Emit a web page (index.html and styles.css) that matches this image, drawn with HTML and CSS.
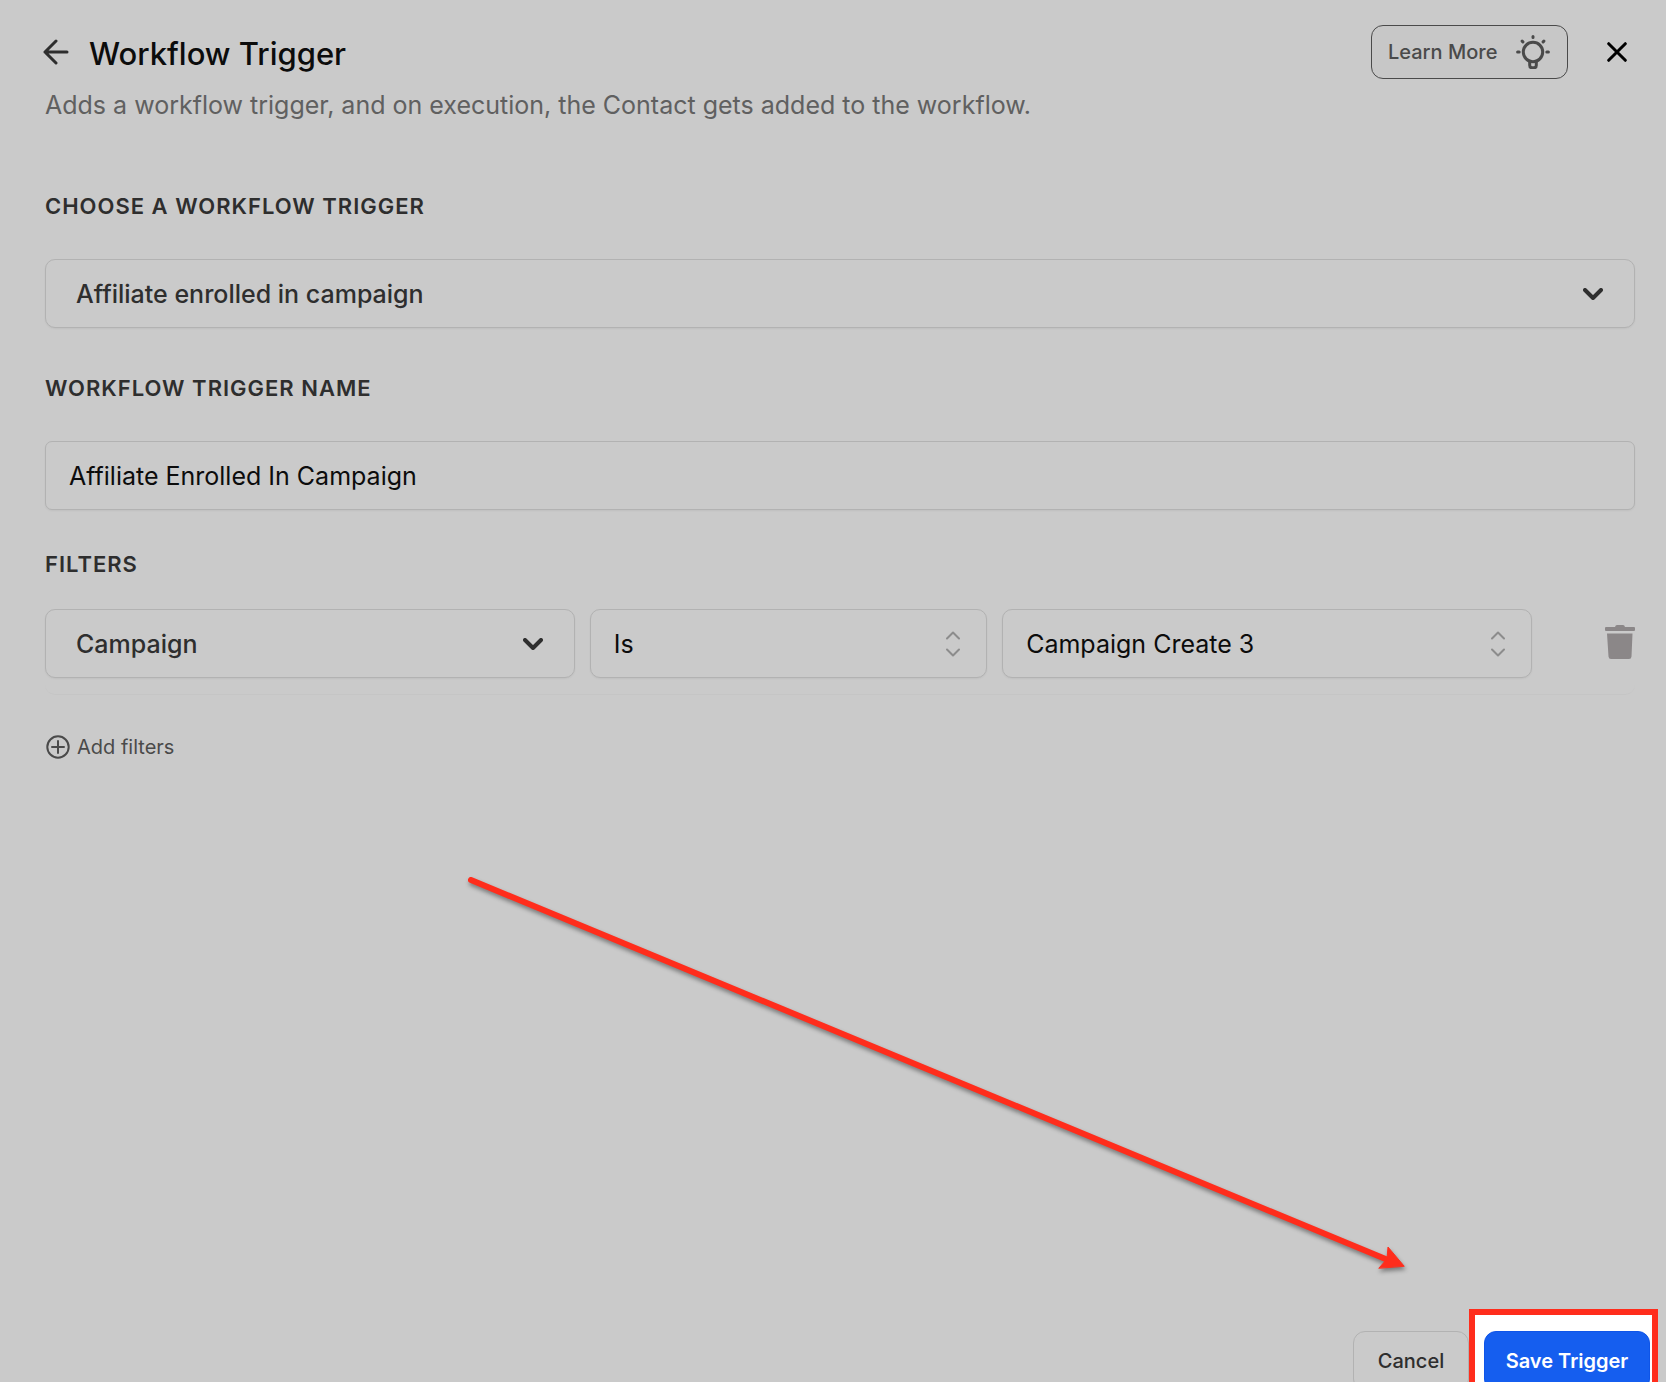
FILE: index.html
```html
<!DOCTYPE html>
<html lang="en">

<head>
    <meta charset="utf-8">
    <meta name="viewport" content="width=device-width, initial-scale=1">
    <title>Workflow Trigger</title>
    <link rel="stylesheet" href="styles.css">
</head>

<body>
    <div class="drawer">
        <header class="drawer-header">
            <div class="header-row">
                <button type="button" class="icon-btn back-btn" aria-label="Back">
                    <svg width="26" height="26" viewBox="0 0 26 26">
                        <path d="M24 13H2M13 2L2 13L13 24" />
                    </svg>
                </button>
                <h1>Workflow Trigger</h1>
                <button type="button" class="learn-btn">
                    Learn More
                    <svg width="34" height="34" viewBox="0 0 34 34">
                        <circle cx="17" cy="17" r="9.7" />
                        <path d="M13.7 26v4.2q0 2.6 2.4 2.6h1.8q2.4 0 2.4-2.6V26" />
                        <path d="M17 1.6v1M6.1 6.1l.8.8M27.9 6.1l-.8.8M1.6 17h1.6M30.8 17h1.6" />
                    </svg>
                </button>
                <button type="button" class="icon-btn close-btn" aria-label="Close">
                    <svg width="20" height="20" viewBox="0 0 20 20">
                        <path d="M1.7 1.7L18.3 18.3M18.3 1.7L1.7 18.3" />
                    </svg>
                </button>
            </div>
            <p>Adds a workflow trigger, and on execution, the Contact gets added to the workflow.</p>
        </header>

        <main class="drawer-body">
            <label class="field-label" for="trigger">Choose a workflow trigger</label>
            <div class="select-wrap main-select">
                <select id="trigger">
                    <option>Affiliate enrolled in campaign</option>
                </select>
                <svg class="chevron" width="20" height="12" viewBox="0 0 20 12">
                    <path d="M2 2L10 10L18 2" />
                </svg>
            </div>

            <label class="field-label" for="trigger-name">Workflow trigger name</label>
            <input type="text" id="trigger-name" class="text-input" value="Affiliate Enrolled In Campaign">

            <h2 class="field-label filters-label">Filters</h2>
            <div class="filter-row">
                <div class="select-wrap main-select">
                    <select aria-label="Filter field">
                        <option>Campaign</option>
                    </select>
                    <svg class="chevron" width="20" height="12" viewBox="0 0 20 12">
                        <path d="M2 2L10 10L18 2" />
                    </svg>
                </div>
                <div class="select-wrap">
                    <select aria-label="Operator">
                        <option>Is</option>
                    </select>
                    <svg class="updown" width="14" height="26" viewBox="0 0 14 26">
                        <path d="M1 7.5L7 1.5L13 7.5M1 18.5L7 24.5L13 18.5" />
                    </svg>
                </div>
                <div class="select-wrap">
                    <select aria-label="Filter value">
                        <option>Campaign Create 3</option>
                    </select>
                    <svg class="updown" width="14" height="26" viewBox="0 0 14 26">
                        <path d="M1 7.5L7 1.5L13 7.5M1 18.5L7 24.5L13 18.5" />
                    </svg>
                </div>
                <button type="button" class="icon-btn trash-btn" aria-label="Delete filter">
                    <svg width="30" height="34" viewBox="0 0 30 34">
                        <path d="M1 2h9q.5-2 2-2h6q1.5 0 2 2h9q1 0 1 1v2q0 1-1 1H1q-1 0-1-1V3q0-1 1-1zM2 8.5h25.500l-1 23q-.2 2.500-2.500 2.500H6q-2.300 0-2.500-2.500z" />
                    </svg>
                </button>
            </div>

            <button type="button" class="add-btn">
                <svg width="24" height="24" viewBox="0 0 24 24">
                    <path d="M12 6v12M6 12h12" />
                    <circle cx="12" cy="12" r="10.7" />
                </svg>
                Add filters
            </button>
        </main>

        <footer class="drawer-footer">
            <button type="button" class="btn btn-cancel">Cancel</button>
            <div class="highlight">
                <button type="button" class="btn btn-save">Save Trigger</button>
            </div>
        </footer>

        <!-- arrow pointing at the save button -->
        <svg class="arrow" width="960" height="410" viewBox="460 870 960 410">
            <path class="arrow-line" d="M471 880L1388 1260" />
            <path class="arrow-head" d="M1404 1266L1388 1247L1387 1259L1379 1268z" />
        </svg>
    </div>
</body>

</html>
```

FILE: styles.css
```css
* {
    box-sizing: border-box;
}

body {
    margin: 0;
    background: #cacaca;
    color: #2e2e2e;
    font-family: Inter, "Liberation Sans", sans-serif;
}

button,
input,
select {
    font-family: inherit;
    color: inherit;
    margin: 0;
}

button {
    cursor: pointer;
}

svg {
    display: block;
    fill: none;
    stroke: currentColor;
    stroke-linecap: round;
    stroke-linejoin: round;
}

.drawer {
    position: relative;
    display: flex;
    flex-direction: column;
    height: 100vh;
    overflow: hidden;
}

/* header */

.drawer-header {
    padding: 25px 39px 0 43px;
}

.header-row {
    display: flex;
    align-items: center;
}

.icon-btn {
    padding: 0;
    border: 0;
    background: none;
}

.back-btn svg {
    stroke-width: 3;
}

h1 {
    flex: 1;
    margin: 0;
    padding: 3px 0 0 20px;
    color: #0c0c0c;
    font-size: 31px;
    font-weight: 500;
    line-height: 40px;
}

.learn-btn {
    display: flex;
    align-items: center;
    justify-content: space-between;
    width: 197px;
    height: 54px;
    padding: 0 17px 0 16px;
    border: 1px solid #4a4a4a;
    border-radius: 12px;
    background: #c7c7c7;
    color: #4a4a4a;
    font-size: 20px;
    font-weight: 500;
}

.learn-btn svg {
    stroke-width: 3;
}

.close-btn {
    margin-left: 39px;
    color: #000;
}

.close-btn svg {
    stroke-width: 3;
}

.drawer-header p {
    margin: 10px 0 0 2px;
    color: #606060;
    font-size: 25px;
    line-height: 32px;
}

/* form */

.drawer-body {
    flex: 1;
    padding: 69px 31px 0 45px;
}

.field-label {
    display: block;
    margin: 0 0 37px;
    font-size: 22px;
    font-weight: 600;
    line-height: 32px;
    letter-spacing: 1px;
    text-transform: uppercase;
}

.select-wrap {
    position: relative;
}

.select-wrap select,
.text-input {
    display: block;
    width: 100%;
    height: 69px;
    padding: 0 23px;
    border: 1px solid #b2b2b2;
    border-radius: 10px;
    background: #cacaca;
    color: #0c0c0c;
    font-size: 25px;
    box-shadow: 0 1px 2px rgba(0, 0, 0, 0.05);
    appearance: none;
}

.text-input {
    border-radius: 7px;
}

.main-select select {
    padding: 0 30px;
    color: #2e2e2e;
    font-weight: 500;
}

.drawer-body > .select-wrap {
    margin-bottom: 44px;
}

.chevron,
.updown {
    position: absolute;
    top: 50%;
    transform: translateY(-50%);
    pointer-events: none;
}

.chevron {
    right: 32px;
    stroke-width: 4;
}

.updown {
    right: 27px;
    color: #8c8c8c;
    stroke-width: 2;
}

.filters-label {
    margin: 38px 0 29px;
}

.filter-row {
    display: grid;
    grid-template-columns: 4fr 3fr 4fr 88px;
    gap: 15px;
    align-items: center;
    padding-bottom: 16px;
    border-bottom: 1px solid #c5c5c5;
    border-radius: 10px;
}

.trash-btn {
    justify-self: end;
    padding-bottom: 4px;
    color: #8b8788;
}

.trash-btn svg {
    fill: currentColor;
    stroke: none;
}

.add-btn {
    display: flex;
    align-items: center;
    gap: 7px;
    margin-top: 40px;
    padding: 0 1px;
    border: 0;
    background: none;
    color: #4a4a4a;
    font-size: 20px;
    line-height: 24px;
}

.add-btn svg {
    stroke-width: 2;
}

/* footer */

.drawer-footer {
    display: flex;
    justify-content: flex-end;
    height: 73px;
    padding-right: 8px;
    overflow: hidden;
}

.btn {
    flex: none;
    height: 60px;
    border-radius: 12px;
    font-size: 20px;
    font-weight: 500;
}

.btn-cancel {
    width: 116px;
    margin-top: 22px;
    border: 1px solid #b2b2b2;
    background: #cacaca;
}

.highlight {
    flex: none;
    height: 100px;
    padding: 16px 2px 0 9px;
    border: 6px solid #ff2d1c;
    background: #fff;
}

.btn-save {
    width: 166px;
    padding: 0;
    border: 1px solid #0f55e8;
    background: #155eef;
    color: #fff;
    font-weight: 600;
}

.arrow {
    position: absolute;
    top: 870px;
    left: 460px;
    filter: drop-shadow(1px 3px 2px rgba(0, 0, 0, 0.4));
    pointer-events: none;
}

.arrow-line {
    stroke: #ff2d1c;
    stroke-width: 6;
}

.arrow-head {
    fill: #ff2d1c;
    stroke: #ff2d1c;
    stroke-width: 1;
    stroke-linejoin: miter;
}
```
